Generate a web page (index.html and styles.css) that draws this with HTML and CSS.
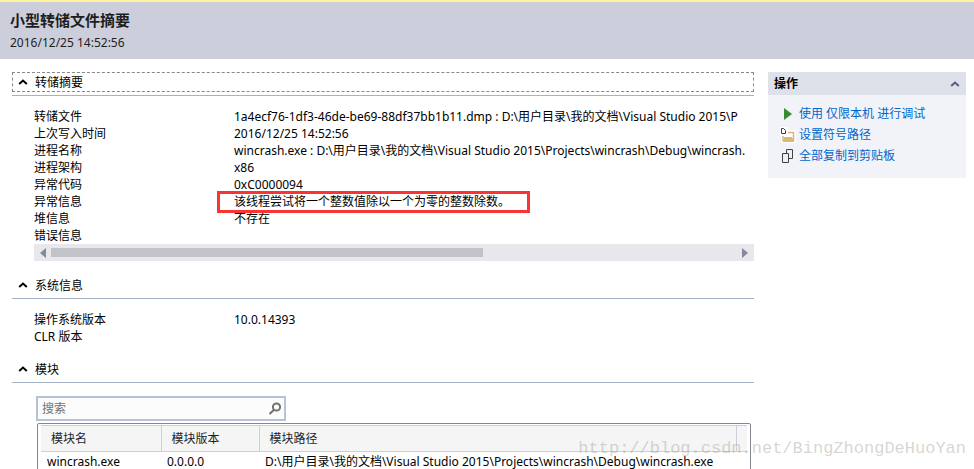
FILE: index.html
```html
<!DOCTYPE html>
<html lang="zh-CN">
<head>
    <meta charset="UTF-8">
    <meta name="viewport" content="width=device-width, initial-scale=1.0">
    <title>小型转储文件摘要</title>
    <link rel="stylesheet" href="styles.css">
</head>
<body>
    <header class="page-header">
        <h1>小型转储文件摘要</h1>
        <p>2016/12/25 14:52:56</p>
    </header>

    <div class="content">
        <main class="main">
            <!-- Dump summary -->
            <section class="section">
                <h2><button type="button" class="section-toggle focused">
                    <svg class="chevron" viewBox="0 0 10 6"><path d="M1.2 5 5 1.5 8.8 5"/></svg>转储摘要
                </button></h2>
                <div class="section-body">
                    <dl class="details">
                        <dt>转储文件</dt>
                        <dd>1a4ecf76-1df3-46de-be69-88df37bb1b11.dmp : D:\用户目录\我的文档\Visual Studio 2015\P</dd>
                        <dt>上次写入时间</dt>
                        <dd>2016/12/25 14:52:56</dd>
                        <dt>进程名称</dt>
                        <dd>wincrash.exe : D:\用户目录\我的文档\Visual Studio 2015\Projects\wincrash\Debug\wincrash.</dd>
                        <dt>进程架构</dt>
                        <dd>x86</dd>
                        <dt>异常代码</dt>
                        <dd>0xC0000094</dd>
                        <dt>异常信息</dt>
                        <dd><span class="marked">该线程尝试将一个整数值除以一个为零的整数除数。</span></dd>
                        <dt>堆信息</dt>
                        <dd>不存在</dd>
                        <dt>错误信息</dt>
                        <dd></dd>
                    </dl>
                    <div class="scrollbar">
                        <svg class="scroll-arrow" viewBox="0 0 6 10"><path d="M6 0v10L0 5z"/></svg>
                        <div class="scroll-track"><div class="scroll-thumb"></div></div>
                        <svg class="scroll-arrow" viewBox="0 0 6 10"><path d="M0 0v10l6-5z"/></svg>
                    </div>
                </div>
            </section>

            <!-- System info -->
            <section class="section">
                <h2><button type="button" class="section-toggle">
                    <svg class="chevron" viewBox="0 0 10 6"><path d="M1.2 5 5 1.5 8.8 5"/></svg>系统信息
                </button></h2>
                <div class="section-body">
                    <dl class="details">
                        <dt>操作系统版本</dt>
                        <dd>10.0.14393</dd>
                        <dt>CLR 版本</dt>
                        <dd></dd>
                    </dl>
                </div>
            </section>

            <!-- Modules -->
            <section class="section">
                <h2><button type="button" class="section-toggle">
                    <svg class="chevron" viewBox="0 0 10 6"><path d="M1.2 5 5 1.5 8.8 5"/></svg>模块
                </button></h2>
                <div class="modules">
                    <div class="search">
                        <input type="text" placeholder="搜索" aria-label="搜索">
                        <svg class="search-icon" viewBox="0 0 14 14"><circle cx="8.5" cy="5" r="3.6"/><path d="M6 7.8 1.5 12"/></svg>
                    </div>
                    <div class="table-box">
                        <table>
                            <colgroup>
                                <col class="col-name">
                                <col class="col-version">
                                <col>
                                <col class="col-end">
                            </colgroup>
                            <thead>
                                <tr><th>模块名</th><th>模块版本</th><th>模块路径</th><th></th></tr>
                            </thead>
                            <tbody>
                                <tr><td>wincrash.exe</td><td>0.0.0.0</td><td>D:\用户目录\我的文档\Visual Studio 2015\Projects\wincrash\Debug\wincrash.exe</td><td></td></tr>
                            </tbody>
                        </table>
                    </div>
                </div>
            </section>
        </main>

        <!-- Actions -->
        <aside class="actions">
            <h2><button type="button" class="actions-toggle">操作
                <svg class="chevron" viewBox="0 0 10 6"><path d="M1.2 5 5 1.5 8.8 5"/></svg>
            </button></h2>
            <ul>
                <li>
                    <svg viewBox="0 0 16 16"><path fill="#388a34" d="M4 2v12l8-6z"/></svg>
                    <a href="#">使用 仅限本机 进行调试</a>
                </li>
                <li>
                    <svg viewBox="0 0 16 16">
                        <path fill="#fff" d="M0 0h8v3h8v13H1V8H0z"/>
                        <path fill="none" stroke="#dcb67a" stroke-width="1.5" d="M8 5.500h5.500V14M3 9v5"/>
                        <path fill="#dcb67a" d="M4 10h8l2 4v1H3v-1z"/>
                        <path fill="none" stroke="#424242" d="M1.500 1.500h2l2 2v3h-4z"/>
                    </svg>
                    <a href="#">设置符号路径</a>
                </li>
                <li>
                    <svg viewBox="0 0 16 16">
                        <path fill="#f0eff1" stroke="#424242" d="M6.500 1.500h6v9h-6z"/>
                        <path fill="#f0eff1" stroke="#424242" d="M2.500 5.500h6v9h-6z"/>
                    </svg>
                    <a href="#">全部复制到剪贴板</a>
                </li>
            </ul>
        </aside>
    </div>

    <div class="watermark">http://blog.csdn.net/BingZhongDeHuoYan</div>
</body>
</html>
```

FILE: styles.css
```css
* {
    margin: 0;
    padding: 0;
    box-sizing: border-box;
}

body {
    position: relative;
    height: 100vh;
    overflow: hidden;
    font-family: "Noto Sans", "Noto Sans CJK SC", sans-serif;
    font-size: 12px;
    line-height: 17px;
    color: #000;
    background: #fff;
}

button,
input {
    font: inherit;
    color: inherit;
    background: none;
    border: none;
}

h2 {
    font-size: 12px;
    font-weight: normal;
}

.page-header {
    padding: 8px 10px;
    background: #cccedb;
    border-top: 2px solid #fff29d;
    color: #1e1e1e;
}

.page-header h1 {
    margin-bottom: 4px;
    font-size: 15px;
    line-height: 20px;
}

.content {
    display: flex;
    align-items: flex-start;
    gap: 14px;
    padding: 13px 8px 0 12px;
}

.main {
    flex: 1;
    min-width: 0;
}

.section {
    margin-bottom: 14px;
}

.section h2 {
    padding-bottom: 3px;
    border-bottom: 1px solid #a5b1c4;
}

.section-toggle {
    display: flex;
    align-items: center;
    gap: 7px;
    width: 100%;
    height: 20px;
    padding: 0 5px;
    border: 1px dashed transparent;
}

.focused {
    border-color: #888;
}

.chevron {
    width: 10px;
    height: 6px;
    fill: none;
    stroke: #000;
    stroke-width: 2;
}

.section-body {
    padding: 12px 0 0 22px;
}

.details {
    display: grid;
    grid-template-columns: 200px 1fr;
    grid-auto-rows: 17px;
    overflow: hidden;
    white-space: nowrap;
}

.details dd {
    min-width: 0;
}

.marked {
    position: relative;
}

/* red frame around the exception text */
.marked::after {
    content: "";
    position: absolute;
    inset: -2px -20px -3px -17px;
    border: 3px solid #fa3434;
}

.scrollbar {
    display: flex;
    align-items: center;
    gap: 5px;
    height: 17px;
    padding: 0 6px;
    background: #e8e8ec;
}

.scroll-arrow {
    width: 6px;
    height: 10px;
    fill: #868999;
}

.scroll-track {
    flex: 1;
}

.scroll-thumb {
    width: 63%;
    height: 9px;
    background: #c2c3c9;
}

.modules {
    padding: 13px 0 0 24px;
}

.search {
    display: flex;
    align-items: center;
    width: 250px;
    height: 25px;
    padding: 0 2px 0 4px;
    background: #fcfcfc;
    border: 2px solid #b9c1d8;
}

.search input {
    flex: 1;
    min-width: 0;
    outline: none;
}

.search input::placeholder {
    color: #717171;
}

.search-icon {
    width: 14px;
    height: 14px;
    fill: none;
    stroke: #717171;
    stroke-width: 2;
}

.table-box {
    margin: 2px 3px 0 1px;
    padding: 1px 3px;
    border: 1px solid #828790;
    border-radius: 2px;
}

table {
    width: 100%;
    table-layout: fixed;
    border-collapse: collapse;
    white-space: nowrap;
}

.col-name {
    width: 120px;
}

.col-version {
    width: 98px;
}

.col-end {
    width: 11px;
}

th {
    height: 26px;
    padding-left: 10px;
    font-weight: normal;
    text-align: left;
    color: #1e1e1e;
    background: #f5f5f5;
    border: 1px solid #cccedb;
    border-left: none;
}

th:last-child {
    padding: 0;
    border-right: none;
}

td {
    height: 20px;
    padding-left: 6px;
}

td:last-child {
    padding: 0;
}

.actions {
    width: 198px;
    background: #f2f3f8;
}

.actions-toggle {
    display: flex;
    align-items: center;
    justify-content: space-between;
    width: 100%;
    height: 23px;
    padding: 0 6px;
    font-weight: bold;
    background: #dee1e9;
}

.actions-toggle .chevron {
    stroke: #525f85;
}

.actions ul {
    padding: 8px 12px 12px;
    list-style: none;
}

.actions li {
    display: flex;
    align-items: center;
    gap: 3px;
    height: 21px;
}

.actions li svg {
    width: 16px;
    height: 16px;
}

.actions a {
    color: #0066cc;
    text-decoration: none;
}

.watermark {
    position: absolute;
    right: 8px;
    bottom: 10px;
    font-family: "Liberation Mono", monospace;
    font-size: 17px;
    line-height: 20px;
    color: rgba(150, 150, 140, 0.4);
    pointer-events: none;
}
```
